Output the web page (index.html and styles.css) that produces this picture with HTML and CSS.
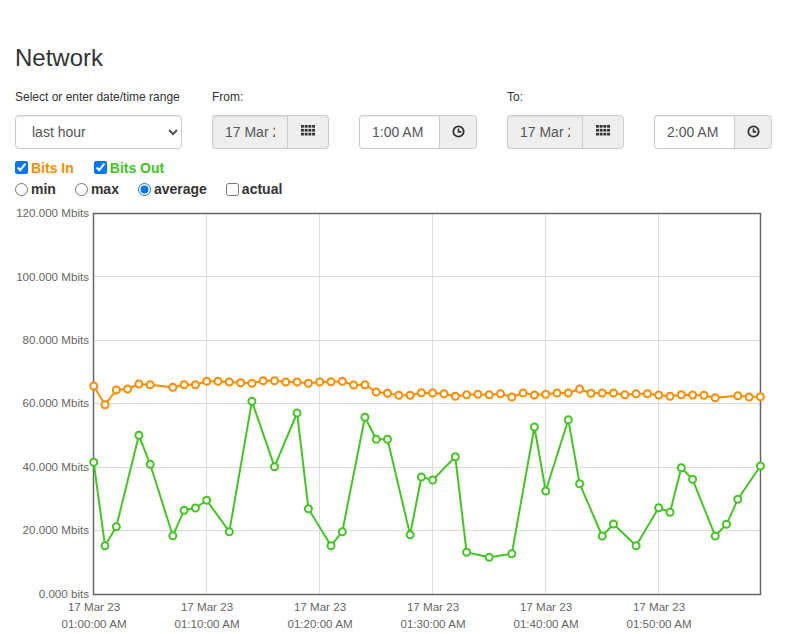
FILE: index.html
```html
<!DOCTYPE html>
<html lang="en">
<head>
<meta charset="utf-8">
<title>Network</title>
<link rel="stylesheet" href="styles.css">
</head>
<body>
<div class="page">
  <h3 class="title">Network</h3>
  <div class="controls">
    <div class="col col-range">
      <label class="lbl">Select or enter date/time range</label>
      <select class="sel"><option>last hour</option></select>
    </div>
    <div class="col">
      <label class="lbl">From:</label>
      <div class="group">
        <input class="inp inp-date" readonly value="17 Mar 2023">
        <span class="addon addon-date">
          <svg width="14" height="11" viewBox="0 0 14 11"><g fill="#333"><rect x="0" y="0" width="2.9" height="2.7"/><rect x="3.7" y="0" width="2.9" height="2.7"/><rect x="7.4" y="0" width="2.9" height="2.7"/><rect x="11.1" y="0" width="2.9" height="2.7"/><rect x="0" y="3.9" width="2.9" height="2.7"/><rect x="3.7" y="3.9" width="2.9" height="2.7"/><rect x="7.4" y="3.9" width="2.9" height="2.7"/><rect x="11.1" y="3.9" width="2.9" height="2.7"/><rect x="0" y="7.8" width="2.9" height="2.7"/><rect x="3.7" y="7.8" width="2.9" height="2.7"/><rect x="7.4" y="7.8" width="2.9" height="2.7"/><rect x="11.1" y="7.8" width="2.9" height="2.7"/></g></svg>
        </span>
      </div>
    </div>
    <div class="col">
      <label class="lbl">&nbsp;</label>
      <div class="group">
        <input class="inp inp-time" value="1:00 AM">
        <span class="addon addon-time">
          <svg width="13" height="13" viewBox="-6.5 -6.5 13 13"><circle r="5.2" fill="none" stroke="#333" stroke-width="1.8"/><path d="M0,-3 V0.4 H2.8" fill="none" stroke="#333" stroke-width="1.6"/></svg>
        </span>
      </div>
    </div>
    <div class="col">
      <label class="lbl">To:</label>
      <div class="group">
        <input class="inp inp-date" readonly value="17 Mar 2023">
        <span class="addon addon-date">
          <svg width="14" height="11" viewBox="0 0 14 11"><g fill="#333"><rect x="0" y="0" width="2.9" height="2.7"/><rect x="3.7" y="0" width="2.9" height="2.7"/><rect x="7.4" y="0" width="2.9" height="2.7"/><rect x="11.1" y="0" width="2.9" height="2.7"/><rect x="0" y="3.9" width="2.9" height="2.7"/><rect x="3.7" y="3.9" width="2.9" height="2.7"/><rect x="7.4" y="3.9" width="2.9" height="2.7"/><rect x="11.1" y="3.9" width="2.9" height="2.7"/><rect x="0" y="7.8" width="2.9" height="2.7"/><rect x="3.7" y="7.8" width="2.9" height="2.7"/><rect x="7.4" y="7.8" width="2.9" height="2.7"/><rect x="11.1" y="7.8" width="2.9" height="2.7"/></g></svg>
        </span>
      </div>
    </div>
    <div class="col">
      <label class="lbl">&nbsp;</label>
      <div class="group">
        <input class="inp inp-time" value="2:00 AM">
        <span class="addon addon-time">
          <svg width="13" height="13" viewBox="-6.5 -6.5 13 13"><circle r="5.2" fill="none" stroke="#333" stroke-width="1.8"/><path d="M0,-3 V0.4 H2.8" fill="none" stroke="#333" stroke-width="1.6"/></svg>
        </span>
      </div>
    </div>
  </div>

  <div class="options">
    <div class="opt-row row-series">
      <label class="opt opt-in"><input type="checkbox" checked>Bits In</label>
      <label class="opt opt-out"><input type="checkbox" checked>Bits Out</label>
    </div>
    <div class="opt-row row-agg">
      <label class="opt"><input type="radio" name="agg">min</label>
      <label class="opt"><input type="radio" name="agg">max</label>
      <label class="opt"><input type="radio" name="agg" checked>average</label>
      <label class="opt"><input type="checkbox">actual</label>
    </div>
  </div>
</div>

<svg class="chart" width="787" height="434" viewBox="0 200 787 434">
  <defs>
    <marker id="mo" viewBox="-5 -5 10 10" markerWidth="10" markerHeight="10" markerUnits="userSpaceOnUse" refX="0" refY="0">
      <circle r="3.5" fill="#fff" stroke="#ff8c00" stroke-width="2"/>
    </marker>
    <marker id="mg" viewBox="-5 -5 10 10" markerWidth="10" markerHeight="10" markerUnits="userSpaceOnUse" refX="0" refY="0">
      <circle r="3.5" fill="#fff" stroke="#44c524" stroke-width="2"/>
    </marker>
  </defs>
  <g class="grid">
    <line x1="93.5" y1="276.5" x2="760.5" y2="276.5"/>
    <line x1="93.5" y1="340.5" x2="760.5" y2="340.5"/>
    <line x1="93.5" y1="403.5" x2="760.5" y2="403.5"/>
    <line x1="93.5" y1="467.5" x2="760.5" y2="467.5"/>
    <line x1="93.5" y1="530.5" x2="760.5" y2="530.5"/>
    <line x1="206.5" y1="213.5" x2="206.5" y2="594.5"/>
    <line x1="319.5" y1="213.5" x2="319.5" y2="594.5"/>
    <line x1="432.5" y1="213.5" x2="432.5" y2="594.5"/>
    <line x1="545.5" y1="213.5" x2="545.5" y2="594.5"/>
    <line x1="658.5" y1="213.5" x2="658.5" y2="594.5"/>
  </g>
  <rect class="frame" x="93.5" y="213.5" width="667" height="381"/>
  <g class="ylab">
    <text x="89" y="217">120.000 Mbits</text>
    <text x="89" y="281">100.000 Mbits</text>
    <text x="89" y="344">80.000 Mbits</text>
    <text x="89" y="407">60.000 Mbits</text>
    <text x="89" y="471">40.000 Mbits</text>
    <text x="89" y="534">20.000 Mbits</text>
    <text x="89" y="598">0.000 bits</text>
  </g>
  <g class="xlab">
    <text x="94" y="611">17 Mar 23</text><text x="94" y="628">01:00:00 AM</text>
    <text x="207" y="611">17 Mar 23</text><text x="207" y="628">01:10:00 AM</text>
    <text x="320" y="611">17 Mar 23</text><text x="320" y="628">01:20:00 AM</text>
    <text x="433" y="611">17 Mar 23</text><text x="433" y="628">01:30:00 AM</text>
    <text x="546" y="611">17 Mar 23</text><text x="546" y="628">01:40:00 AM</text>
    <text x="659" y="611">17 Mar 23</text><text x="659" y="628">01:50:00 AM</text>
  </g>
  <polyline class="line-in" points="93.7,386 105,404.7 116.3,390 127.6,389 138.9,384 150.2,384.7 172.8,387.3 184.1,384.7 195.4,384.7 206.7,381.3 218,381.3 229.3,382 240.6,382.7 251.9,383.3 263.2,380.7 274.5,380.7 285.8,382 297.1,382 308.4,383.3 319.7,382 331,381.7 342.3,381.3 353.6,385 364.9,384.7 376.2,392 387.5,393.3 398.8,395.3 410.1,395.3 421.4,392.7 432.7,393 444,393.7 455.3,396.3 466.6,394.7 477.9,394.3 489.2,394.7 500.5,393.7 511.8,397 523.1,393 534.4,395 545.7,394.3 557,393 568.3,393 579.6,389 590.9,393.3 602.2,393 613.5,393 624.8,394.7 636.1,393.7 647.4,393.7 658.7,395 670,396.3 681.3,394.7 692.6,395 703.9,395.3 715.2,397.7 737.8,395.7 749.1,397 760.4,396.7"/>
  <polyline class="line-out" points="93.7,462.3 105,545.7 116.3,526.7 138.9,435.3 150.2,464.3 172.8,535.7 184.1,510.3 195.4,508 206.7,500.3 229.3,531.7 251.9,401.3 274.5,466.7 297.1,413 308.4,508.7 331,545.7 342.3,531.7 364.9,417.3 376.2,439.3 387.5,439.3 410.1,534.7 421.4,477 432.7,480 455.3,456.7 466.6,552.3 489.2,557.3 511.8,553.7 534.4,427 545.7,491 568.3,419.7 579.6,483.7 602.2,536 613.5,524 636.1,545.7 658.7,507.7 670,512.3 681.3,467.7 692.6,479.3 715.2,536 726.5,524.3 737.8,499.3 760.4,466"/>
</svg>
</body>
</html>
```

FILE: styles.css
```css
html, body {
  margin: 0;
  padding: 0;
  background: #fff;
}

body {
  font-family: "Liberation Sans", Arial, sans-serif;
  font-size: 14px;
  color: #333;
}

.page {
  padding: 0 15px;
}

.title {
  margin: 45px 0 18px;
  font-size: 24px;
  font-weight: normal;
  line-height: 26px;
  color: #333;
}

.controls {
  display: flex;
  gap: 30px;
}

.col {
  display: flex;
  flex-direction: column;
}

.col-range {
  width: 167px;
}

.lbl {
  display: block;
  font-size: 12px;
  line-height: 17px;
  height: 17px;
  margin-bottom: 9px;
  color: #333;
}

.sel {
  box-sizing: border-box;
  width: 167px;
  height: 34px;
  padding: 6px 8px 6px 12px;
  border: 1px solid #ccc;
  border-radius: 4px;
  background-color: #fff;
  font-family: "Liberation Sans", Arial, sans-serif;
  font-size: 14px;
  color: #555;
  box-shadow: inset 0 1px 1px rgba(0, 0, 0, 0.075);
}

.group {
  display: flex;
  height: 34px;
}

.inp {
  box-sizing: border-box;
  height: 34px;
  margin: 0;
  padding: 6px 12px;
  border: 1px solid #ccc;
  border-right: 0;
  border-radius: 4px 0 0 4px;
  font-family: "Liberation Sans", Arial, sans-serif;
  font-size: 14px;
  color: #555;
  background: #fff;
  outline: none;
  box-shadow: inset 0 1px 1px rgba(0, 0, 0, 0.075);
}

.inp-date {
  width: 75px;
  background: #eee;
}

.inp-time {
  width: 80px;
}

.addon {
  box-sizing: border-box;
  display: flex;
  align-items: center;
  justify-content: center;
  height: 34px;
  border: 1px solid #ccc;
  border-radius: 0 4px 4px 0;
  background: #eee;
}

.addon-date {
  width: 42px;
}

.addon-date svg {
  margin-top: -3px;
}

.addon-time {
  width: 38px;
}

.addon-time svg {
  margin-top: -1px;
}

.options {
  margin-top: 8px;
}

.opt-row {
  display: flex;
  align-items: center;
}

.row-series {
  height: 21px;
  gap: 20px;
}

.row-agg {
  height: 22px;
  gap: 19px;
}

.opt {
  display: flex;
  align-items: center;
  font-size: 14px;
  font-weight: bold;
  color: #333;
}

.opt input {
  width: 13px;
  height: 13px;
  margin: 0 3px 0 0;
}

.opt-in {
  color: #ff8c00;
}

.opt-out {
  color: #44c524;
}

.chart {
  display: block;
}

.grid line {
  stroke: #ddd;
  stroke-width: 1;
}

.frame {
  fill: none;
  stroke: #666;
  stroke-width: 1.5;
}

.ylab text {
  font-family: "Liberation Sans", Arial, sans-serif;
  font-size: 11.6px;
  fill: #666;
  text-anchor: end;
}

.xlab text {
  font-family: "Liberation Sans", Arial, sans-serif;
  font-size: 11.6px;
  fill: #666;
  text-anchor: middle;
}

.line-in {
  fill: none;
  stroke: #ff8c00;
  stroke-width: 2;
  stroke-linejoin: round;
  marker-start: url(#mo);
  marker-mid: url(#mo);
  marker-end: url(#mo);
}

.line-out {
  fill: none;
  stroke: #44c524;
  stroke-width: 2;
  stroke-linejoin: round;
  marker-start: url(#mg);
  marker-mid: url(#mg);
  marker-end: url(#mg);
}
```
